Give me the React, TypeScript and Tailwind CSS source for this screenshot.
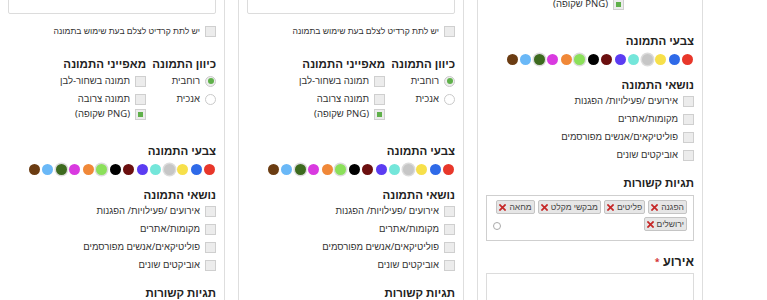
import React from "react";

const FONT = '"Noto Sans", Roboto, sans-serif';

const Check = ({ checked = false }: { checked?: boolean }) => (
  <span className="w-[11px] h-[11px] border border-[#cfcfcf] bg-[#ececec] flex items-center justify-center shrink-0">
    {checked && <span className="w-[5px] h-[5px] bg-[#5fb04a]" />}
  </span>
);

const Radio = ({ checked = false }: { checked?: boolean }) => (
  <span
    className={
      "w-[11px] h-[11px] rounded-full border border-[#cacaca] flex items-center justify-center shrink-0 " +
      (checked ? "bg-[#eeeeee]" : "bg-white")
    }
  >
    {checked && <span className="w-[6px] h-[6px] rounded-full bg-[#5fb04a]" />}
  </span>
);

const Row = ({ children, className = "" }: { children: React.ReactNode; className?: string }) => (
  <div className={"flex items-center gap-[5px] h-[14px] text-[9.5px] leading-[14px] text-[#333] whitespace-nowrap " + className}>
    {children}
  </div>
);

const Heading = ({ children, className = "" }: { children: React.ReactNode; className?: string }) => (
  <div className={"text-[11.5px] font-bold leading-[16px] text-[#222] whitespace-nowrap " + className}>{children}</div>
);

const dots: { c: string; ring?: boolean }[] = [
  { c: "bg-[#e8372a]" },
  { c: "bg-[#2f6ae8]" },
  { c: "bg-[#f7e04a]" },
  { c: "bg-[#c6c6c6]", ring: true },
  { c: "bg-[#74e6da]" },
  { c: "bg-[#5b3cf2]" },
  { c: "bg-[#6b0f0f]" },
  { c: "bg-[#000000]" },
  { c: "bg-[#8be05a]", ring: true },
  { c: "bg-[#f08838]" },
  { c: "bg-[#d93ae0]" },
  { c: "bg-[#3d6a1e]", ring: true },
  { c: "bg-[#6ab8f7]" },
  { c: "bg-[#6b3c12]" },
];

const XIcon = () => (
  <svg width="7" height="7" viewBox="0 0 8 8" className="shrink-0">
    <path d="M1.2 1.2 L6.8 6.8 M6.8 1.2 L1.2 6.8" stroke="#c62828" strokeWidth="2" strokeLinecap="square" />
  </svg>
);

const Tag = ({ label }: { label: string }) => (
  <div className="flex items-center gap-[3px] h-[14px] px-[2px] bg-[#e6e6e6] border border-[#c4c4c4] rounded-[2px] text-[8.5px] leading-[12px] text-[#444] whitespace-nowrap">
    <span>{label}</span>
    <XIcon />
  </div>
);

const Panel = ({ className = "" }: { className?: string }) => (
  <div
    dir="rtl"
    className={"w-[226px] shrink-0 border-x border-[#dedede] px-2 pt-[14px] pb-4 bg-white " + className}
    style={{ fontFamily: FONT }}
  >
    <div className="h-[60px] border border-[#dcdcdc] rounded-[2px]" />

    <div className="mt-[10px] flex items-center gap-[5px] h-[14px] text-[8.6px] leading-[14px] text-[#333] whitespace-nowrap">
      <Check />
      <span>יש לתת קרדיט לצלם בעת שימוש בתמונה</span>
    </div>

    <div className="mt-[18px] flex gap-[6px]">
      <div className="w-[64px] shrink-0">
        <Heading>כיוון התמונה</Heading>
        <Row className="mt-[2px]">
          <Radio checked />
          <span>רוחבית</span>
        </Row>
        <Row className="mt-[4px]">
          <Radio />
          <span>אנכית</span>
        </Row>
      </div>
      <div>
        <Heading>מאפייני התמונה</Heading>
        <Row className="mt-[2px]">
          <Check />
          <span>תמונה בשחור-לבן</span>
        </Row>
        <Row className="mt-[4px]">
          <Check />
          <span>תמונה צרובה</span>
        </Row>
        <Row className="mt-[1px]">
          <Check checked />
          <span dir="ltr">(<span>שקופה</span> PNG)</span>
        </Row>
      </div>
    </div>

    <Heading className="mt-[22px]">צבעי התמונה</Heading>
    <div className="mt-[5px] flex gap-[2.5px] pr-[1px]">
      {dots.map((d, i) => (
        <span
          key={i}
          className={
            "w-[11px] h-[11px] rounded-full shrink-0 " + d.c + (d.ring ? " ring-[1.5px] ring-[#dcdcdc]" : "")
          }
        />
      ))}
    </div>

    <Heading className="mt-[12px]">נושאי התמונה</Heading>
    <div className="mt-[1px] flex flex-col gap-[4px]">
      <Row>
        <Check />
        <span>אירועים /פעילויות/ הפגנות</span>
      </Row>
      <Row>
        <Check />
        <span>מקומות/אתרים</span>
      </Row>
      <Row>
        <Check />
        <span>פוליטיקאים/אנשים מפורסמים</span>
      </Row>
      <Row>
        <Check />
        <span>אוביקטים שונים</span>
      </Row>
    </div>

    <Heading className="mt-[13px]">תגיות קשורות</Heading>
    <div className="mt-[4px] h-[46px] border border-[#cfcfcf] pt-[4px] pr-[6px] pl-[3px] flex flex-wrap content-start gap-x-[3px] gap-y-[3px]">
      <Tag label="הפגנה" />
      <Tag label="פליטים" />
      <Tag label="מבקשי מקלט" />
      <Tag label="מחאה" />
      <Tag label="ירושלים" />
      <div className="flex-1 flex items-center justify-end h-[14px] mt-[2px] pl-[3px]">
        <span className="w-[8px] h-[8px] rounded-full border border-[#aaaaaa]" />
      </div>
    </div>

    <div className="mt-[12px] text-[12.5px] font-bold leading-[18px] text-[#222] whitespace-nowrap">
      אירוע <span className="text-[#d32f2f] text-[9px] align-top">*</span>
    </div>
    <div className="mt-[2px] h-[30px] border border-[#dcdcdc]" />
  </div>
);

export default function App() {
  return (
    <div dir="ltr" className="w-[767px] h-[300px] overflow-hidden bg-white flex items-start gap-[13px]">
      <Panel className="ml-[-1px] mt-[-60px]" />
      <Panel className="mt-[-60px]" />
      <Panel className="mt-[-170px]" />
    </div>
  );
}
